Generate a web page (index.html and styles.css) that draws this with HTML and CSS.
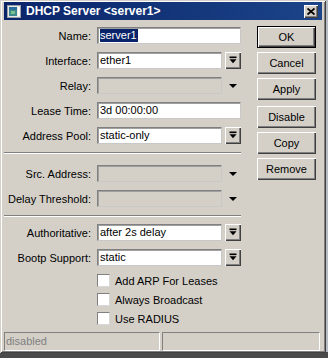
FILE: index.html
```html
<!DOCTYPE html>
<html>
<head>
<meta charset="utf-8">
<link rel="stylesheet" href="styles.css">
</head>
<body>
<div class="window">
  <div class="titlebar">
    <svg class="ticon" width="14" height="13" viewBox="0 0 14 13">
      <rect x="0.5" y="0.5" width="13" height="12" fill="#e8e8e8" stroke="#9aa0a8"/>
      <rect x="2" y="2" width="8" height="9" fill="#3c8a8c"/>
      <rect x="2" y="2" width="8" height="3" fill="#2a6e9a"/>
      <rect x="4" y="6" width="4" height="3" fill="#7cc08c"/>
      <rect x="11" y="2" width="1.5" height="9" fill="#ffffff"/>
    </svg>
    <span class="ttext">DHCP Server &lt;server1&gt;</span>
    <span class="close">
      <svg width="8" height="7" viewBox="0 0 8 7"><path d="M0.5 0.5 L7.5 6.5 M7.5 0.5 L0.5 6.5" stroke="#000" stroke-width="1.8"/></svg>
    </span>
  </div>
  <div class="main">
    <div class="form">
      <div class="row">
        <label class="lbl">Name:</label>
        <div class="field full"><span class="sel">server1</span></div>
      </div>
      <div class="row">
        <label class="lbl">Interface:</label>
        <div class="field short">ether1</div>
        <span class="ddbtn"><svg width="16" height="17" viewBox="0 0 16 17"><rect x="4.5" y="4.5" width="7" height="1.6" fill="#000"/><path d="M4.5 7.3 L11.5 7.3 L8 11.3 Z" fill="#000"/></svg></span>
      </div>
      <div class="row">
        <label class="lbl">Relay:</label>
        <div class="field short dis"></div>
        <span class="ddarrow"><svg width="16" height="17" viewBox="0 0 16 17"><path d="M4 7 L12 7 L8 11 Z" fill="#000"/></svg></span>
      </div>
      <div class="row">
        <label class="lbl">Lease Time:</label>
        <div class="field full">3d 00:00:00</div>
      </div>
      <div class="row">
        <label class="lbl">Address Pool:</label>
        <div class="field short">static-only</div>
        <span class="ddbtn"><svg width="16" height="17" viewBox="0 0 16 17"><rect x="4.5" y="4.5" width="7" height="1.6" fill="#000"/><path d="M4.5 7.3 L11.5 7.3 L8 11.3 Z" fill="#000"/></svg></span>
      </div>
      <div class="sep sep1"></div>
      <div class="row">
        <label class="lbl">Src. Address:</label>
        <div class="field short dis"></div>
        <span class="ddarrow"><svg width="16" height="17" viewBox="0 0 16 17"><path d="M4 7 L12 7 L8 11 Z" fill="#000"/></svg></span>
      </div>
      <div class="row">
        <label class="lbl">Delay Threshold:</label>
        <div class="field short dis"></div>
        <span class="ddarrow"><svg width="16" height="17" viewBox="0 0 16 17"><path d="M4 7 L12 7 L8 11 Z" fill="#000"/></svg></span>
      </div>
      <div class="sep sep2"></div>
      <div class="row">
        <label class="lbl">Authoritative:</label>
        <div class="field short">after 2s delay</div>
        <span class="ddbtn"><svg width="16" height="17" viewBox="0 0 16 17"><rect x="4.5" y="4.5" width="7" height="1.6" fill="#000"/><path d="M4.5 7.3 L11.5 7.3 L8 11.3 Z" fill="#000"/></svg></span>
      </div>
      <div class="row">
        <label class="lbl">Bootp Support:</label>
        <div class="field short">static</div>
        <span class="ddbtn"><svg width="16" height="17" viewBox="0 0 16 17"><rect x="4.5" y="4.5" width="7" height="1.6" fill="#000"/><path d="M4.5 7.3 L11.5 7.3 L8 11.3 Z" fill="#000"/></svg></span>
      </div>
      <div class="checks">
        <div class="chk"><span class="box"></span><span>Add ARP For Leases</span></div>
        <div class="chk"><span class="box"></span><span>Always Broadcast</span></div>
        <div class="chk"><span class="box"></span><span>Use RADIUS</span></div>
      </div>
    </div>
    <div class="buttons">
      <div class="btn default">OK</div>
      <div class="btn">Cancel</div>
      <div class="btn">Apply</div>
      <div class="btn gap">Disable</div>
      <div class="btn">Copy</div>
      <div class="btn">Remove</div>
    </div>
  </div>
  <div class="status">
    <div class="panel p1">disabled</div>
    <div class="panel p2"></div>
  </div>
</div>
</body>
</html>
```
FILE: styles.css
```css
html, body {
  margin: 0;
  padding: 0;
}
body {
  width: 328px;
  height: 358px;
  overflow: hidden;
  background: linear-gradient(to bottom, #b8bcc4 0, #b8bcc4 352px, #4a4a4a 352px);
  font-family: "Liberation Sans", Arial, sans-serif;
  font-size: 11px;
  color: #000;
}
.window {
  width: 326px;
  height: 353px;
  box-sizing: border-box;
  padding: 2px 4px 2px 4px;
  background: #d4d0c8;
  display: flex;
  flex-direction: column;
  box-shadow: inset 1px 1px 0 #d4d0c8, inset -1px -1px 0 #404040, inset 2px 2px 0 #ffffff, inset -2px -2px 0 #808080;
}
.titlebar {
  height: 18px;
  flex: none;
  display: flex;
  align-items: center;
  background: linear-gradient(to right, #0a246a, #1c4488);
  padding-left: 3px;
}
.ticon {
  flex: none;
  margin-right: 5px;
}
.ttext {
  color: #fff;
  font-weight: bold;
  font-size: 12px;
  flex: 1;
  white-space: nowrap;
}
.close {
  width: 14px;
  height: 13px;
  box-sizing: border-box;
  margin-right: 4px;
  background: #d4d0c8;
  display: flex;
  align-items: center;
  justify-content: center;
  box-shadow: inset 1px 1px 0 #fff, inset -1px -1px 0 #404040, inset -2px -2px 0 #808080;
}
.main {
  flex: 1;
  display: flex;
  padding-top: 6px;
}
.form {
  width: 237px;
  padding-top: 1px;
}
.row {
  display: flex;
  align-items: center;
  height: 17px;
  margin-bottom: 8px;
}
.lbl {
  width: 87px;
  padding-right: 1px;
  margin-right: 5px;
  text-align: right;
  white-space: nowrap;
}
.field {
  height: 17px;
  box-sizing: border-box;
  background: #fff;
  border: 1px solid #808080;
  border-right-color: #c8c8c8;
  border-bottom-color: #c8c8c8;
  box-shadow: inset 1px 1px 0 #a0a0a0;
  padding: 0 2px;
  line-height: 15px;
  white-space: nowrap;
  overflow: hidden;
}
.field.full { width: 144px; }
.field.short { width: 125px; margin-right: 3px; }
.field.dis { background: #d4d0c8; }
.sel {
  background: #0a246a;
  color: #fff;
  display: inline-block;
  line-height: 13px;
  padding: 0 1px 0 0;
}
.ddbtn {
  width: 16px;
  height: 17px;
  box-sizing: border-box;
  background: #d4d0c8;
  display: block;
  box-shadow: inset 1px 1px 0 #fff, inset -1px -1px 0 #404040, inset -2px -2px 0 #808080;
}
.ddbtn svg, .ddarrow svg { display: block; }
.ddarrow {
  width: 16px;
  height: 17px;
  display: block;
}
.sep {
  height: 1px;
  border-top: 1px solid #808080;
  border-bottom: 1px solid #fff;
  height: 0;
}
.sep1 { margin: 1px 0 11px 0; }
.sep2 { margin: 1px 0 7px 0; }
.checks {
  padding-left: 93px;
  padding-top: 0;
}
.chk {
  display: flex;
  align-items: center;
  height: 13px;
  margin-bottom: 6px;
}
.box {
  width: 13px;
  height: 13px;
  box-sizing: border-box;
  background: #fff;
  border: 1px solid #808080;
  border-right-color: #d8d8d8;
  border-bottom-color: #d8d8d8;
  margin-right: 5px;
  flex: none;
}
.buttons {
  margin-left: 16px;
  width: 59px;
}
.btn {
  height: 22px;
  box-sizing: border-box;
  margin-bottom: 4px;
  display: flex;
  align-items: center;
  justify-content: center;
  background: #d4d0c8;
  box-shadow: inset 1px 1px 0 #fff, inset -1px -1px 0 #404040, inset -2px -2px 0 #808080;
}
.btn.default {
  box-shadow: inset 0 0 0 1px #000, inset 2px 2px 0 #fff, inset -2px -2px 0 #404040, inset -3px -3px 0 #808080;
}
.btn.gap { margin-top: 6px; }
.status {
  height: 19px;
  flex: none;
  display: flex;
}
.panel {
  height: 19px;
  box-sizing: border-box;
  border: 1px solid #808080;
  border-right-color: #fff;
  border-bottom-color: #fff;
  color: #808080;
  line-height: 17px;
  padding-left: 1px;
}
.p1 { width: 156px; margin-right: 2px; }
.p2 { flex: 1; margin-right: 2px; }
```
